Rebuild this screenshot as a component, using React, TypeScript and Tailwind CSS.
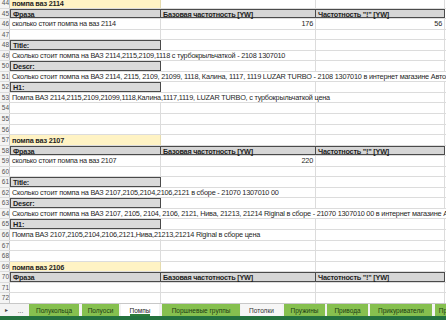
import React from 'react';

type Kind = 'title' | 'header' | 'label' | 'text' | 'data' | 'empty';

interface SheetRow {
  n: number;
  kind: Kind;
  a?: string;
  b?: string;
  c?: string;
}

const rows: SheetRow[] = [
  { n: 44, kind: 'title', a: 'помпа ваз 2114' },
  { n: 45, kind: 'header' },
  { n: 46, kind: 'data', a: 'сколько стоит помпа на ваз 2114', b: '176', c: '56' },
  { n: 47, kind: 'empty' },
  { n: 48, kind: 'label', a: 'Title:' },
  { n: 49, kind: 'text', a: 'Сколько стоит помпа на ВАЗ 2114,2115,2109,1118 с турбокрыльчаткой - 2108 1307010' },
  { n: 50, kind: 'label', a: 'Descr:' },
  { n: 51, kind: 'text', a: 'Сколько стоит помпа на ВАЗ 2114, 2115, 2109, 21099, 1118, Калина, 1117, 1119 LUZAR TURBO - 2108 1307010 в интернет магазине Автозапчасти' },
  { n: 52, kind: 'label', a: 'H1:' },
  { n: 53, kind: 'text', a: 'Помпа ВАЗ 2114,2115,2109,21099,1118,Калина,1117,1119, LUZAR TURBO, с турбокрыльчаткой цена' },
  { n: 54, kind: 'empty' },
  { n: 55, kind: 'empty' },
  { n: 56, kind: 'empty' },
  { n: 57, kind: 'title', a: 'помпа ваз 2107' },
  { n: 58, kind: 'header' },
  { n: 59, kind: 'data', a: 'сколько стоит помпа на ваз 2107', b: '220' },
  { n: 60, kind: 'empty' },
  { n: 61, kind: 'label', a: 'Title:' },
  { n: 62, kind: 'text', a: 'Сколько стоит помпа на ВАЗ 2107,2105,2104,2106,2121 в сборе - 21070 1307010 00' },
  { n: 63, kind: 'label', a: 'Descr:' },
  { n: 64, kind: 'text', a: 'Сколько стоит помпа на ВАЗ 2107, 2105, 2104, 2106, 2121, Нива, 21213, 21214 Riginal в сборе - 21070 1307010 00 в интернет магазине Автозапчасти' },
  { n: 65, kind: 'label', a: 'H1:' },
  { n: 66, kind: 'text', a: 'Помпа ВАЗ 2107,2105,2104,2106,2121,Нива,21213,21214 Riginal в сборе цена' },
  { n: 67, kind: 'empty' },
  { n: 68, kind: 'empty' },
  { n: 69, kind: 'title', a: 'помпа ваз 2106' },
  { n: 70, kind: 'header' },
  { n: 71, kind: 'empty' },
  { n: 72, kind: 'empty' },
];

const tabs = [
  { name: 'Полукольца', cls: 'w-[50px] ml-0', style: 'green' },
  { name: 'Полуоси', cls: 'w-[37px] ml-[3px]', style: 'green' },
  { name: 'Помпы', cls: 'w-[38px] ml-[2px]', style: 'active' },
  { name: 'Поршневые группы', cls: 'w-[78px] ml-[3px]', style: 'green' },
  { name: 'Потолки', cls: 'w-[41px] ml-[1px]', style: 'plain' },
  { name: 'Пружины', cls: 'w-[41px] ml-[2px]', style: 'green' },
  { name: 'Привода', cls: 'w-[41px] ml-[2px]', style: 'green' },
  { name: 'Прикуриватели', cls: 'w-[62px] ml-[2px]', style: 'green' },
  { name: 'Прокладки', cls: 'w-[40px] ml-[3px]', style: 'green' },
];

const RowNum = ({ n }: { n: number }) => (
  <div className="w-[10px] shrink-0 overflow-hidden text-right text-[6.5px] tracking-normal leading-[10.5px] text-[#555] border-r border-[#c8c8c8] bg-[#f4f4f4]">
    <span className="inline-block">{n}</span>
  </div>
);

const SheetLine = ({ row }: { row: SheetRow }) => {
  const base = 'flex h-[10.55px] leading-[10.5px] border-b border-[#dcdcdc]';

  if (row.kind === 'header') {
    return (
      <div className={base}>
        <RowNum n={row.n} />
        <div className="w-[151px] shrink-0 bg-[#d6d6d6] border border-[#4a4a4a] font-bold px-[2px] leading-[9px]">Фраза</div>
        <div className="w-[155px] shrink-0 bg-[#d6d6d6] border-y border-r border-[#4a4a4a] font-bold px-[2px] leading-[9px]">Базовая частотность [YW]</div>
        <div className="w-[129px] shrink-0 bg-[#d6d6d6] border-y border-r border-[#4a4a4a] font-bold px-[2px] leading-[9px]">Частотность "!" [YW]</div>
        <div className="flex-1" />
      </div>
    );
  }

  if (row.kind === 'title') {
    return (
      <div className={base}>
        <RowNum n={row.n} />
        <div className="w-[151px] shrink-0 bg-[#fff3c4] font-bold px-[2px] pt-[1px] leading-[9.5px] border-r border-[#e6dcae]">{row.a}</div>
        <div className="w-[155px] shrink-0 border-r border-[#dcdcdc]" />
        <div className="w-[129px] shrink-0 border-r border-[#dcdcdc]" />
        <div className="flex-1" />
      </div>
    );
  }

  if (row.kind === 'label') {
    return (
      <div className={base}>
        <RowNum n={row.n} />
        <div className="w-[151px] shrink-0 bg-[#dadada] border border-[#4a4a4a] font-bold px-[2px] leading-[9px]">{row.a}</div>
        <div className="w-[155px] shrink-0 border-r border-[#dcdcdc]" />
        <div className="w-[129px] shrink-0 border-r border-[#dcdcdc]" />
        <div className="flex-1" />
      </div>
    );
  }

  return (
    <div className={base}>
      <RowNum n={row.n} />
      <div className="w-[151px] shrink-0 border-r border-[#dcdcdc] px-[2px] whitespace-nowrap overflow-visible">
        {row.a && <span className="relative z-10 bg-white pr-[1px]">{row.a}</span>}
      </div>
      <div className="w-[155px] shrink-0 border-r border-[#dcdcdc] text-right pr-[2px]">{row.b}</div>
      <div className="w-[129px] shrink-0 border-r border-[#dcdcdc] text-right pr-[2px]">{row.c}</div>
      <div className="flex-1" />
    </div>
  );
};

const App: React.FC = () => {
  return (
    <div className="w-[446px] h-[320px] overflow-hidden bg-white flex flex-col font-['Liberation_Sans',sans-serif] text-[7.3px] tracking-[-0.22px] text-[#1f1f1f]">
      <div className="h-[303px] overflow-hidden">
        <div className="-mt-[2px]">
          {rows.map(r => (
            <SheetLine key={r.n} row={r} />
          ))}
        </div>
      </div>

      <div className="h-[13px] flex items-stretch bg-[#f3f3f3] text-[6.5px] tracking-normal leading-[13px] border-t border-[#c8c8c8]">
        <div className="w-[12px] shrink-0 flex items-center justify-center text-[6px] text-[#444]">▸</div>
        <div className="w-[17px] shrink-0 text-center text-[#444]">...</div>
        <div className="flex overflow-hidden">
          {tabs.map(t => (
            <div
              key={t.name}
              className={`${t.cls} shrink-0 text-center whitespace-nowrap overflow-hidden ${
                t.style === 'green'
                  ? 'bg-[#86c04f] text-[#1d3d12]'
                  : t.style === 'active'
                  ? 'bg-white text-[#222]'
                  : 'bg-[#f6f6f6] text-[#333]'
              }`}
            >
              {t.style === 'active' ? (
                <span className="border-b-2 border-[#2f7d3a]">{t.name}</span>
              ) : (
                t.name
              )}
            </div>
          ))}
        </div>
      </div>
      <div className="flex-1 bg-[#24723f]" />
    </div>
  );
};

export default App;
